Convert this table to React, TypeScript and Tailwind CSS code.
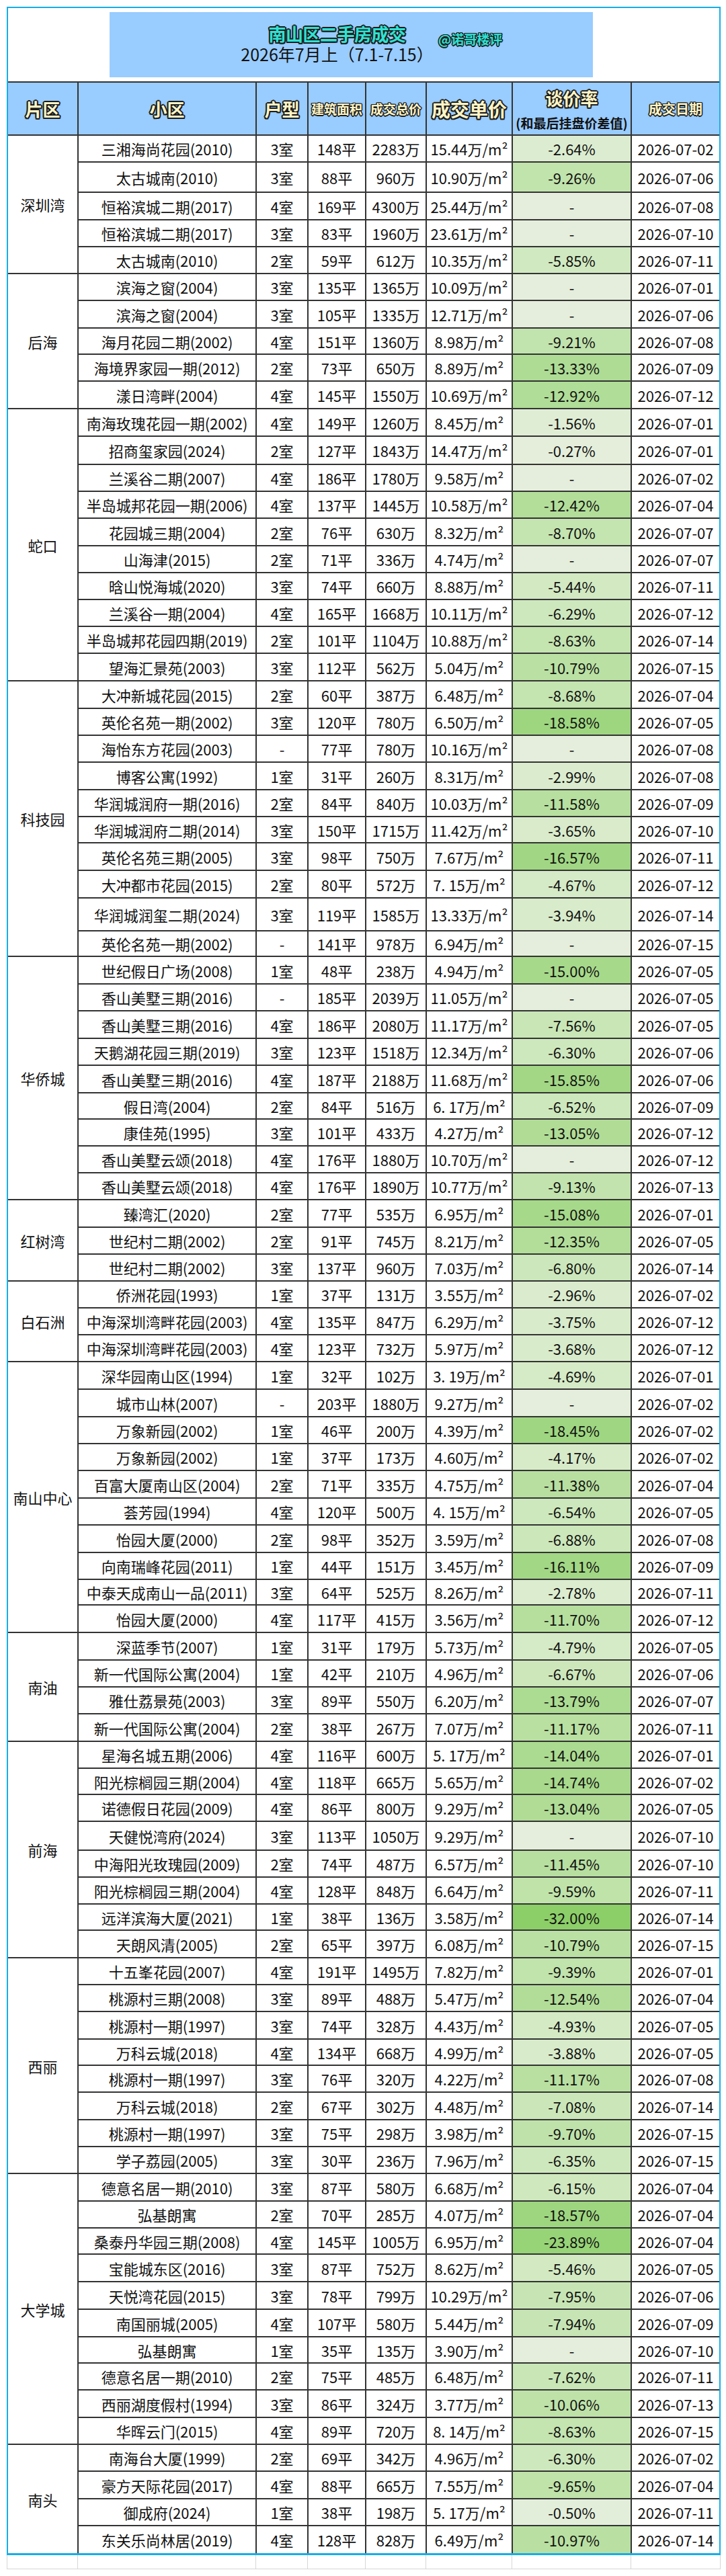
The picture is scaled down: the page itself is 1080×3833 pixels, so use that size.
import React from "react";

// 南山区二手房成交表（2026年7月上）
type Section = { area: string; rows: string[] };

const sections: Section[] = [
  {
    area: "深圳湾",
    rows: [
      "三湘海尚花园(2010)|3室|148平|2283万|15.44万/m²|-2.64%|2026-07-02|40",
      "太古城南(2010)|3室|88平|960万|10.90万/m²|-9.26%|2026-07-06|45",
      "恒裕滨城二期(2017)|4室|169平|4300万|25.44万/m²|-|2026-07-08|41",
      "恒裕滨城二期(2017)|3室|83平|1960万|23.61万/m²|-|2026-07-10|40",
      "太古城南(2010)|2室|59平|612万|10.35万/m²|-5.85%|2026-07-11|40",
    ],
  },
  {
    area: "后海",
    rows: [
      "滨海之窗(2004)|3室|135平|1365万|10.09万/m²|-|2026-07-01|40",
      "滨海之窗(2004)|3室|105平|1335万|12.71万/m²|-|2026-07-06|41",
      "海月花园二期(2002)|4室|151平|1360万|8.98万/m²|-9.21%|2026-07-08|39",
      "海境界家园一期(2012)|2室|73平|650万|8.89万/m²|-13.33%|2026-07-09|40",
      "漾日湾畔(2004)|4室|145平|1550万|10.69万/m²|-12.92%|2026-07-12|41",
    ],
  },
  {
    area: "蛇口",
    rows: [
      "南海玫瑰花园一期(2002)|4室|149平|1260万|8.45万/m²|-1.56%|2026-07-01|41",
      "招商玺家园(2024)|2室|127平|1843万|14.47万/m²|-0.27%|2026-07-01|42",
      "兰溪谷二期(2007)|4室|186平|1780万|9.58万/m²|-|2026-07-02|40",
      "半岛城邦花园一期(2006)|4室|137平|1445万|10.58万/m²|-12.42%|2026-07-04|40",
      "花园城三期(2004)|2室|76平|630万|8.32万/m²|-8.70%|2026-07-07|41",
      "山海津(2015)|2室|71平|336万|4.74万/m²|-|2026-07-07|40",
      "晗山悦海城(2020)|3室|74平|660万|8.88万/m²|-5.44%|2026-07-11|40",
      "兰溪谷一期(2004)|4室|165平|1668万|10.11万/m²|-6.29%|2026-07-12|40",
      "半岛城邦花园四期(2019)|2室|101平|1104万|10.88万/m²|-8.63%|2026-07-14|40",
      "望海汇景苑(2003)|3室|112平|562万|5.04万/m²|-10.79%|2026-07-15|41",
    ],
  },
  {
    area: "科技园",
    rows: [
      "大冲新城花园(2015)|2室|60平|387万|6.48万/m²|-8.68%|2026-07-04|41",
      "英伦名苑一期(2002)|3室|120平|780万|6.50万/m²|-18.58%|2026-07-05|40",
      "海怡东方花园(2003)|-|77平|780万|10.16万/m²|-|2026-07-08|40",
      "博客公寓(1992)|1室|31平|260万|8.31万/m²|-2.99%|2026-07-08|41",
      "华润城润府一期(2016)|2室|84平|840万|10.03万/m²|-11.58%|2026-07-09|40",
      "华润城润府二期(2014)|3室|150平|1715万|11.42万/m²|-3.65%|2026-07-10|39",
      "英伦名苑三期(2005)|3室|98平|750万|7.67万/m²|-16.57%|2026-07-11|41",
      "大冲都市花园(2015)|2室|80平|572万|7. 15万/m²|-4.67%|2026-07-12|41",
      "华润城润玺二期(2024)|3室|119平|1585万|13.33万/m²|-3.94%|2026-07-14|49",
      "英伦名苑一期(2002)|-|141平|978万|6.94万/m²|-|2026-07-15|38",
    ],
  },
  {
    area: "华侨城",
    rows: [
      "世纪假日广场(2008)|1室|48平|238万|4.94万/m²|-15.00%|2026-07-05|41",
      "香山美墅三期(2016)|-|185平|2039万|11.05万/m²|-|2026-07-05|40",
      "香山美墅三期(2016)|4室|186平|2080万|11.17万/m²|-7.56%|2026-07-05|41",
      "天鹅湖花园三期(2019)|3室|123平|1518万|12.34万/m²|-6.30%|2026-07-06|40",
      "香山美墅三期(2016)|4室|187平|2188万|11.68万/m²|-15.85%|2026-07-06|41",
      "假日湾(2004)|2室|84平|516万|6. 17万/m²|-6.52%|2026-07-09|39",
      "康佳苑(1995)|3室|101平|433万|4.27万/m²|-13.05%|2026-07-12|40",
      "香山美墅云颂(2018)|4室|176平|1880万|10.70万/m²|-|2026-07-12|40",
      "香山美墅云颂(2018)|4室|176平|1890万|10.77万/m²|-9.13%|2026-07-13|40",
    ],
  },
  {
    area: "红树湾",
    rows: [
      "臻湾汇(2020)|2室|77平|535万|6.95万/m²|-15.08%|2026-07-01|41",
      "世纪村二期(2002)|2室|91平|745万|8.21万/m²|-12.35%|2026-07-05|40",
      "世纪村二期(2002)|3室|137平|960万|7.03万/m²|-6.80%|2026-07-14|40",
    ],
  },
  {
    area: "白石洲",
    rows: [
      "侨洲花园(1993)|1室|37平|131万|3.55万/m²|-2.96%|2026-07-02|40",
      "中海深圳湾畔花园(2003)|4室|135平|847万|6.29万/m²|-3.75%|2026-07-12|40",
      "中海深圳湾畔花园(2003)|4室|123平|732万|5.97万/m²|-3.68%|2026-07-12|40",
    ],
  },
  {
    area: "南山中心",
    rows: [
      "深华园南山区(1994)|1室|32平|102万|3. 19万/m²|-4.69%|2026-07-01|41",
      "城市山林(2007)|-|203平|1880万|9.27万/m²|-|2026-07-02|41",
      "万象新园(2002)|1室|46平|200万|4.39万/m²|-18.45%|2026-07-02|40",
      "万象新园(2002)|1室|37平|173万|4.60万/m²|-4.17%|2026-07-02|40",
      "百富大厦南山区(2004)|2室|71平|335万|4.75万/m²|-11.38%|2026-07-04|41",
      "荟芳园(1994)|4室|120平|500万|4. 15万/m²|-6.54%|2026-07-05|40",
      "怡园大厦(2000)|2室|98平|352万|3.59万/m²|-6.88%|2026-07-08|41",
      "向南瑞峰花园(2011)|1室|44平|151万|3.45万/m²|-16.11%|2026-07-09|40",
      "中泰天成南山一品(2011)|3室|64平|525万|8.26万/m²|-2.78%|2026-07-11|38",
      "怡园大厦(2000)|4室|117平|415万|3.56万/m²|-11.70%|2026-07-12|41",
    ],
  },
  {
    area: "南油",
    rows: [
      "深蓝季节(2007)|1室|31平|179万|5.73万/m²|-4.79%|2026-07-05|41",
      "新一代国际公寓(2004)|1室|42平|210万|4.96万/m²|-6.67%|2026-07-06|40",
      "雅仕荔景苑(2003)|3室|89平|550万|6.20万/m²|-13.79%|2026-07-07|40",
      "新一代国际公寓(2004)|2室|38平|267万|7.07万/m²|-11.17%|2026-07-11|41",
    ],
  },
  {
    area: "前海",
    rows: [
      "星海名城五期(2006)|4室|116平|600万|5. 17万/m²|-14.04%|2026-07-01|40",
      "阳光棕榈园三期(2004)|4室|118平|665万|5.65万/m²|-14.74%|2026-07-02|39",
      "诺德假日花园(2009)|4室|86平|800万|9.29万/m²|-13.04%|2026-07-05|40",
      "天健悦湾府(2024)|3室|113平|1050万|9.29万/m²|-|2026-07-10|43",
      "中海阳光玫瑰园(2009)|2室|74平|487万|6.57万/m²|-11.45%|2026-07-10|40",
      "阳光棕榈园三期(2004)|4室|128平|848万|6.64万/m²|-9.59%|2026-07-11|40",
      "远洋滨海大厦(2021)|1室|38平|136万|3.58万/m²|-32.00%|2026-07-14|39",
      "天朗风清(2005)|2室|65平|397万|6.08万/m²|-10.79%|2026-07-15|41",
    ],
  },
  {
    area: "西丽",
    rows: [
      "十五峯花园(2007)|4室|191平|1495万|7.82万/m²|-9.39%|2026-07-01|40",
      "桃源村三期(2008)|3室|89平|488万|5.47万/m²|-12.54%|2026-07-04|40",
      "桃源村一期(1997)|3室|74平|328万|4.43万/m²|-4.93%|2026-07-05|41",
      "万科云城(2018)|4室|134平|668万|4.99万/m²|-3.88%|2026-07-05|39",
      "桃源村一期(1997)|3室|76平|320万|4.22万/m²|-11.17%|2026-07-08|40",
      "万科云城(2018)|2室|67平|302万|4.48万/m²|-7.08%|2026-07-14|41",
      "桃源村一期(1997)|3室|75平|298万|3.98万/m²|-9.70%|2026-07-15|40",
      "学子荔园(2005)|3室|30平|236万|7.96万/m²|-6.35%|2026-07-15|40",
    ],
  },
  {
    area: "大学城",
    rows: [
      "德意名居一期(2010)|3室|87平|580万|6.68万/m²|-6.15%|2026-07-04|41",
      "弘基朗寓|2室|70平|285万|4.07万/m²|-18.57%|2026-07-04|40",
      "桑泰丹华园三期(2008)|4室|145平|1005万|6.95万/m²|-23.89%|2026-07-04|39",
      "宝能城东区(2016)|3室|87平|752万|8.62万/m²|-5.46%|2026-07-05|41",
      "天悦湾花园(2015)|3室|78平|799万|10.29万/m²|-7.95%|2026-07-06|41",
      "南国丽城(2005)|4室|107平|580万|5.44万/m²|-7.94%|2026-07-09|41",
      "弘基朗寓|1室|35平|135万|3.90万/m²|-|2026-07-10|39",
      "德意名居一期(2010)|2室|75平|485万|6.48万/m²|-7.62%|2026-07-11|40",
      "西丽湖度假村(1994)|3室|86平|324万|3.77万/m²|-10.06%|2026-07-13|41",
      "华晖云门(2015)|4室|89平|720万|8. 14万/m²|-8.63%|2026-07-15|40",
    ],
  },
  {
    area: "南头",
    rows: [
      "南海台大厦(1999)|2室|69平|342万|4.96万/m²|-6.30%|2026-07-02|40",
      "豪方天际花园(2017)|4室|88平|665万|7.55万/m²|-9.65%|2026-07-04|41",
      "御成府(2024)|1室|38平|198万|5. 17万/m²|-0.50%|2026-07-11|40",
      "东关乐尚林居(2019)|4室|128平|828万|6.49万/m²|-10.97%|2026-07-14|40",
    ],
  },
];

const heights: Record<string, string> = {
  "38": "h-[38px]",
  "39": "h-[39px]",
  "40": "h-[40px]",
  "41": "h-[41px]",
  "42": "h-[42px]",
  "43": "h-[43px]",
  "45": "h-[45px]",
  "49": "h-[49px]",
};

const colW = ["w-[265px]", "w-[77px]", "w-[86px]", "w-[90px]", "w-[128px]", "w-[177px]", "w-[130px]"];

const outline =
  "[text-shadow:2px_0_0_#1c1c1c,-2px_0_0_#1c1c1c,0_2px_0_#1c1c1c,0_-2px_0_#1c1c1c,1.5px_1.5px_0_#1c1c1c,-1.5px_-1.5px_0_#1c1c1c,1.5px_-1.5px_0_#1c1c1c,-1.5px_1.5px_0_#1c1c1c]";
const outlineSm =
  "[text-shadow:1.5px_0_0_#1c1c1c,-1.5px_0_0_#1c1c1c,0_1.5px_0_#1c1c1c,0_-1.5px_0_#1c1c1c,1px_1px_0_#1c1c1c,-1px_-1px_0_#1c1c1c,1px_-1px_0_#1c1c1c,-1px_1px_0_#1c1c1c]";

// 谈价率底色：数值越大越绿
const stops: [number, number[]][] = [
  [0, [229, 238, 220]],
  [5, [212, 234, 197]],
  [10, [190, 226, 168]],
  [16, [162, 215, 133]],
  [32, [140, 206, 104]],
];

function discBg(s: string) {
  if (s === "-") return "#e5eedc";
  const v = Math.min(32, Math.abs(parseFloat(s)));
  for (let i = 1; i < stops.length; i++) {
    const [b, cb] = stops[i];
    const [a, ca] = stops[i - 1];
    if (v <= b) {
      const t = (v - a) / (b - a);
      const c = ca.map((x, k) => Math.round(x + (cb[k] - x) * t));
      return `rgb(${c[0]},${c[1]},${c[2]})`;
    }
  }
  return "rgb(140,206,104)";
}

function DataRow({ line, last }: { line: string; last: boolean }) {
  const f = line.split("|");
  const cells = f.slice(0, 7);
  return (
    <div className={`flex ${heights[f[7]]} ${last ? "" : "border-b-2 border-[#333]"}`}>
      {cells.map((c, i) => (
        <div
          key={i}
          className={`${colW[i]} shrink-0 flex items-center justify-center whitespace-nowrap ${i < 6 ? "border-r-2 border-[#333]" : ""}`}
          style={i === 5 ? { backgroundColor: discBg(c) } : undefined}
        >
          {c}
        </div>
      ))}
    </div>
  );
}

function HeaderRow() {
  const cell = "shrink-0 flex items-center justify-center border-r-2 border-[#333] font-bold text-[#fff5c6] leading-none";
  return (
    <div className="flex h-[81px] border-t-2 border-b-2 border-[#333] bg-[#99ccff]">
      <div className={`w-[105px] text-[26px] ${cell} ${outline}`}>片区</div>
      <div className={`w-[265px] text-[26px] ${cell} ${outline}`}>小区</div>
      <div className={`w-[77px] text-[26px] ${cell} ${outline}`}>户型</div>
      <div className={`w-[86px] text-[19px] ${cell} ${outlineSm}`}>建筑面积</div>
      <div className={`w-[90px] text-[19px] ${cell} ${outlineSm}`}>成交总价</div>
      <div className={`w-[128px] text-[28px] ${cell} ${outline}`}>成交单价</div>
      <div className="w-[177px] shrink-0 flex flex-col items-center justify-center border-r-2 border-[#333] pt-[6px]">
        <span className={`text-[26px] leading-[36px] font-bold text-[#fff5c6] ${outline}`}>谈价率</span>
        <span className="text-[19px] leading-[38px] font-semibold text-[#111]">(和最后挂盘价差值)</span>
      </div>
      <div className={`w-[130px] shrink-0 flex items-center justify-center font-bold text-[#fff5c6] text-[20px] leading-none ${outlineSm}`}>
        成交日期
      </div>
    </div>
  );
}

export default function App() {
  return (
    <div className="w-[1080px] min-h-[3833px] bg-white pt-[10px] text-[#111] [font-family:'Noto_Sans_CJK_SC','Liberation_Sans',sans-serif]">
      <div className="ml-[10px] w-[1062px] border-t-2 border-l-2 border-r-2 border-b-[3px] border-[#17ade8]">
        {/* 标题 */}
        <div className="h-[109px] pt-[6px]">
          <div className="ml-[151px] w-[719px] h-[97px] bg-[#99ccff] flex pl-[200px] pt-[17px]">
            <div className="w-[277px] flex flex-col items-center">
              <div className={`text-[26px] leading-[30px] font-bold text-[#2fe2d4] tracking-[-0.5px] ${outline}`}>南山区二手房成交</div>
              <div className="text-[25px] leading-[30px] text-[#111] whitespace-nowrap">2026年7月上（7.1-7.15）</div>
            </div>
            <div className={`ml-[12px] mt-[9px] self-start text-[19px] leading-[28px] font-bold text-[#2fe2d4] ${outlineSm}`}>@诺哥楼评</div>
          </div>
        </div>

        <HeaderRow />

        <div className="text-[22px] leading-none">
          {sections.map((s, si) => {
            const lastSec = si === sections.length - 1;
            return (
              <div key={s.area} className="flex">
                <div
                  className={`w-[105px] shrink-0 flex items-center justify-center border-r-2 border-[#333] ${lastSec ? "" : "border-b-2"}`}
                >
                  {s.area}
                </div>
                <div className="flex flex-col">
                  {s.rows.map((r, ri) => (
                    <DataRow key={ri} line={r} last={lastSec && ri === s.rows.length - 1} />
                  ))}
                </div>
              </div>
            );
          })}
        </div>
      </div>

      {/* 表格下方的空白网格行 */}
      <div className="ml-[10px] w-[1062px] h-[21px] flex border-l border-r border-b border-[#d6d6d6]">
        <div className="w-[105px] shrink-0 border-r border-[#d6d6d6]" />
        {colW.map((w, i) => (
          <div key={i} className={`${w} shrink-0 ${i < 6 ? "border-r border-[#d6d6d6]" : ""}`} />
        ))}
      </div>
    </div>
  );
}
